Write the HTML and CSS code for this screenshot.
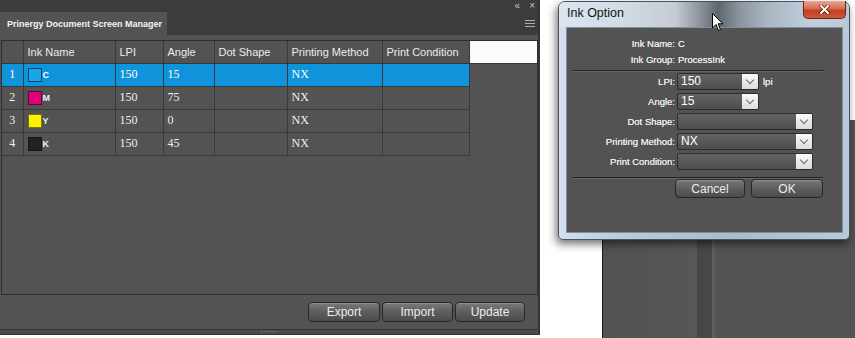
FILE: index.html
```html
<!DOCTYPE html>
<html lang="en">
<head>
    <meta charset="UTF-8">
    <title>Prinergy Document Screen Manager</title>
    <link rel="stylesheet" href="styles.css">
</head>
<body>
    <div class="screen">
        <section class="panel">
            <div class="panel-top">
                <span>&laquo;</span>
                <span>&times;</span>
            </div>
            <div class="panel-tabs">
                <div class="tab">Prinergy Document Screen Manager</div>
                <div class="menu"><span></span><span></span><span></span></div>
            </div>
            <div class="panel-body">
                <div class="grid-box">
                    <table class="ink-table">
                        <colgroup>
                            <col style="width:21px"><col style="width:92px"><col style="width:48px"><col style="width:51px">
                            <col style="width:73px"><col style="width:95px"><col style="width:87px"><col style="width:68px">
                        </colgroup>
                        <thead>
                            <tr>
                                <th class="num"></th>
                                <th>Ink Name</th>
                                <th>LPI</th>
                                <th>Angle</th>
                                <th>Dot Shape</th>
                                <th>Printing Method</th>
                                <th>Print Condition</th>
                                <th class="filler"></th>
                            </tr>
                        </thead>
                        <tbody>
                            <tr class="selected">
                                <td class="num">1</td>
                                <td><span class="swatch cyan"></span><b>C</b></td>
                                <td>150</td><td>15</td><td></td><td>NX</td><td></td>
                            </tr>
                            <tr>
                                <td class="num">2</td>
                                <td><span class="swatch magenta"></span><b>M</b></td>
                                <td>150</td><td>75</td><td></td><td>NX</td><td></td>
                            </tr>
                            <tr>
                                <td class="num">3</td>
                                <td><span class="swatch yellow"></span><b>Y</b></td>
                                <td>150</td><td>0</td><td></td><td>NX</td><td></td>
                            </tr>
                            <tr>
                                <td class="num">4</td>
                                <td><span class="swatch black"></span><b>K</b></td>
                                <td>150</td><td>45</td><td></td><td>NX</td><td></td>
                            </tr>
                        </tbody>
                    </table>
                </div>
                <div class="button-bar">
                    <button class="btn export">Export</button>
                    <button class="btn import">Import</button>
                    <button class="btn update">Update</button>
                </div>
            </div>
            <div class="panel-grip"><span></span></div>
        </section>

        <div class="desk">
            <div class="back-window">
                <div class="back-pane"></div>
                <div class="back-split"></div>
                <div class="back-main"></div>
            </div>

            <div class="dialog">
                <div class="dialog-title">Ink Option</div>
                <div class="dialog-close">
                    <svg width="11" height="9" viewBox="0 0 11 9">
                        <path d="M2 1 L9 8 M9 1 L2 8" stroke="#5a1608" stroke-width="3.4" stroke-linecap="round"/>
                        <path d="M2 1 L9 8 M9 1 L2 8" stroke="#fff" stroke-width="2" stroke-linecap="round"/>
                    </svg>
                </div>
                <svg class="cursor" width="12" height="19" viewBox="0 0 12 19">
                    <path d="M0.5 0.5 L0.5 15 L4 11.5 L6.5 17.5 L8.5 16.6 L6 10.8 L10.8 10.8 Z" fill="#fff" stroke="#000" stroke-width="1"/>
                </svg>
                <div class="dialog-body">
                    <dl class="info">
                        <dt>Ink Name:</dt><dd>C</dd>
                        <dt>Ink Group:</dt><dd>ProcessInk</dd>
                    </dl>
                    <div class="sep"></div>
                    <div class="fields">
                        <label>LPI:</label>
                        <div class="field-cell">
                            <div class="combo short"><span>150</span><i class="drop"></i></div>
                            <span class="unit">lpi</span>
                        </div>
                        <label>Angle:</label>
                        <div class="field-cell">
                            <div class="combo short"><span>15</span><i class="drop"></i></div>
                        </div>
                        <label>Dot Shape:</label>
                        <div class="field-cell">
                            <div class="combo"><span></span><i class="drop"></i></div>
                        </div>
                        <label>Printing Method:</label>
                        <div class="field-cell">
                            <div class="combo"><span>NX</span><i class="drop"></i></div>
                        </div>
                        <label>Print Condition:</label>
                        <div class="field-cell">
                            <div class="combo"><span></span><i class="drop"></i></div>
                        </div>
                    </div>
                    <div class="sep lower"></div>
                    <div class="actions">
                        <button class="btn cancel">Cancel</button>
                        <button class="btn ok">OK</button>
                    </div>
                </div>
            </div>
        </div>
    </div>
</body>
</html>
```

FILE: styles.css
```css
* {
    box-sizing: border-box;
}
html, body {
    margin: 0;
}
body {
    width: 855px;
    height: 338px;
    overflow: hidden;
    background: #fff;
    font-family: "Liberation Sans", Arial, sans-serif;
}
.screen {
    display: flex;
    height: 338px;
}

/* left panel */
.panel {
    width: 540px;
    height: 335px;
    display: flex;
    flex-direction: column;
    background: #535353;
    border-right: 2px solid #343434;
}
.panel-top {
    height: 12px;
    background: #3c3c3c;
    display: flex;
    justify-content: flex-end;
    align-items: center;
    gap: 9px;
    padding-right: 3px;
    color: #c8c8c8;
    font-size: 10px;
    line-height: 1;
}
.panel-tabs {
    height: 23px;
    background: #3c3c3c;
    display: flex;
    justify-content: space-between;
    align-items: center;
}
.tab {
    width: 167px;
    height: 100%;
    background: #535353;
    color: #f4f4f4;
    font-size: 9px;
    font-weight: bold;
    padding-left: 7px;
    display: flex;
    align-items: center;
}
.menu {
    display: flex;
    flex-direction: column;
    gap: 2px;
    padding-right: 3px;
}
.menu span {
    display: block;
    width: 10px;
    height: 1px;
    background: #b0b0b0;
}
.panel-body {
    flex: 1;
    display: flex;
    flex-direction: column;
    padding-top: 5px;
}
.grid-box {
    height: 255px;
    margin-left: 1px;
    border: 1px solid #2e2e2e;
    overflow: hidden;
}
.ink-table {
    border-collapse: collapse;
    table-layout: fixed;
    width: 535px;
}
.ink-table th, .ink-table td {
    border: 1px solid #3a3a3a;
    padding: 0 0 0 4px;
    text-align: left;
    white-space: nowrap;
    overflow: hidden;
}
.ink-table th {
    height: 22px;
    border-top: 0;
    border-bottom-color: #363636;
    font-weight: normal;
    font-size: 11px;
    color: #ececec;
}
.ink-table th:first-child, .ink-table td:first-child {
    border-left: 0;
}
.ink-table th.filler {
    background: #fbfbfb;
    border-right: 0;
}
.ink-table td {
    height: 23px;
    font-family: "Liberation Serif", "Times New Roman", serif;
    font-size: 12px;
    color: #f0f0f0;
}
.ink-table td.num {
    text-align: center;
    padding: 0;
}
.ink-table tr.selected td {
    background: #0f94db;
    color: #fff;
}
.ink-table td b {
    font-family: "Liberation Sans", Arial, sans-serif;
    font-size: 9px;
    margin-left: 1px;
    vertical-align: middle;
}
.swatch {
    display: inline-block;
    width: 14px;
    height: 14px;
    border: 1px solid #222;
    vertical-align: middle;
}
.swatch.cyan { background: #16a6e9; border-color: #0b3f78; }
.swatch.magenta { background: #e2007a; border-color: #5c0a30; }
.swatch.yellow { background: #fff200; border-color: #7c7400; }
.swatch.black { background: #222; border-color: #151515; }

.button-bar {
    height: 34px;
    display: flex;
    justify-content: flex-end;
    align-items: center;
    gap: 2px;
    padding-right: 13px;
}
.btn {
    height: 20px;
    padding: 0;
    border: 1px solid #262626;
    border-radius: 4px;
    background: linear-gradient(#7a7a7a, #606060 45%, #4c4c4c);
    box-shadow: inset 0 1px 0 rgba(255, 255, 255, 0.18);
    color: #ececec;
    font-family: "Liberation Sans", Arial, sans-serif;
    font-size: 12px;
}
.btn.export { width: 72px; }
.btn.import { width: 71px; }
.btn.update { width: 70px; }
.panel-grip {
    height: 6px;
    border-top: 1px solid #333;
    border-bottom: 1px solid #333;
    background: #4c4c4c;
    display: flex;
    justify-content: center;
}
.panel-grip span {
    width: 16px;
    height: 2px;
    margin-top: 1px;
    border-top: 1px dotted #777;
}

/* right side desktop */
.desk {
    flex: 1;
    position: relative;
    display: flex;
}
.back-window {
    flex: 1;
    margin: 120px 0 0 62px;
    display: flex;
    background: #545454;
    border-left: 1px solid #1c1c1c;
}
.back-pane {
    width: 94px;
    background: linear-gradient(90deg, #525252, #575757);
}
.back-split {
    width: 18px;
    background: #474747;
    border-right: 3px solid #5f5f5f;
}
.back-main {
    flex: 1;
    background: #535353;
}

/* Ink Option dialog */
.dialog {
    position: absolute;
    left: 18px;
    top: 1px;
    width: 292px;
    height: 239px;
    display: flex;
    flex-direction: column;
    border: 1px solid #46525e;
    border-radius: 7px 7px 5px 5px;
    background: linear-gradient(90deg, #d3e1ee 0%, #b9cbdc 20%, #a9bbcd 60%, #b9c9d9 100%);
    box-shadow: -2px 4px 8px rgba(0, 0, 0, 0.55);
}
.dialog-title {
    height: 25px;
    padding: 0 0 3px 8px;
    display: flex;
    align-items: center;
    border-radius: 6px 6px 0 0;
    background: linear-gradient(90deg, #dbe6f1 0%, #d2dbe4 22%, #c6ccd3 40%, #8a9097 49%, #60666d 55%, #8a949e 62%, #aab6c2 72%, #c2d0de 88%, #b8c7d6 100%);
    color: #141414;
    font-size: 12.5px;
}
.dialog-close {
    position: absolute;
    top: -1px;
    right: 3px;
    width: 43px;
    height: 18px;
    display: flex;
    justify-content: center;
    align-items: center;
    border: 1px solid #6d2414;
    border-top: 0;
    border-radius: 0 0 5px 5px;
    background: linear-gradient(#e7a796, #d66a52 45%, #c63d22 55%, #c95a3a);
}
.cursor {
    position: absolute;
    left: 153px;
    top: 11px;
}
.dialog-body {
    flex: 1;
    margin: 0 6px 6px 7px;
    border: 1px solid #7f8f9f;
    background: #535353;
    color: #ececec;
    font-size: 9.5px;
    text-shadow: 0 0 0.4px #ececec;
}
.info {
    margin: 8px 0 0;
    display: grid;
    grid-template-columns: 108px 1fr;
    column-gap: 3px;
    line-height: 16px;
}
.info dt {
    text-align: right;
}
.info dd {
    margin: 0;
}
.sep {
    width: 250px;
    margin: 2px 0 0 6px;
    border-top: 1px solid #222;
    border-bottom: 1px solid #666;
}
.sep.lower {
    margin-top: 7px;
}
.fields {
    margin-top: 1px;
    display: grid;
    grid-template-columns: 110px 1fr;
    grid-auto-rows: 17px;
    row-gap: 3px;
}
.fields label {
    text-align: right;
    padding-right: 2px;
    line-height: 17px;
}
.field-cell {
    display: flex;
    align-items: center;
}
.combo {
    width: 136px;
    height: 17px;
    display: flex;
    border: 1px solid #2c2c2c;
    border-radius: 2px;
    background: linear-gradient(#636363, #4e4e4e);
    overflow: hidden;
}
.combo.short {
    width: 82px;
}
.combo span {
    flex: 1;
    padding-left: 3px;
    color: #fff;
    font-size: 12px;
    line-height: 15px;
    text-shadow: none;
}
.drop {
    width: 16px;
    background: linear-gradient(#fafafa, #dcdcdc);
    display: flex;
    justify-content: center;
    align-items: center;
}
.drop::after {
    content: "";
    width: 5px;
    height: 5px;
    margin-top: -3px;
    border-right: 1.5px solid #6a6a6a;
    border-bottom: 1.5px solid #6a6a6a;
    transform: rotate(45deg);
}
.unit {
    margin-left: 4px;
    font-size: 9.5px;
}
.actions {
    margin-top: 0;
    padding-left: 108px;
    display: flex;
    gap: 6px;
}
.btn.cancel {
    width: 70px;
    height: 19px;
    text-shadow: none;
}
.btn.ok {
    width: 72px;
    height: 19px;
    text-shadow: none;
}
```
